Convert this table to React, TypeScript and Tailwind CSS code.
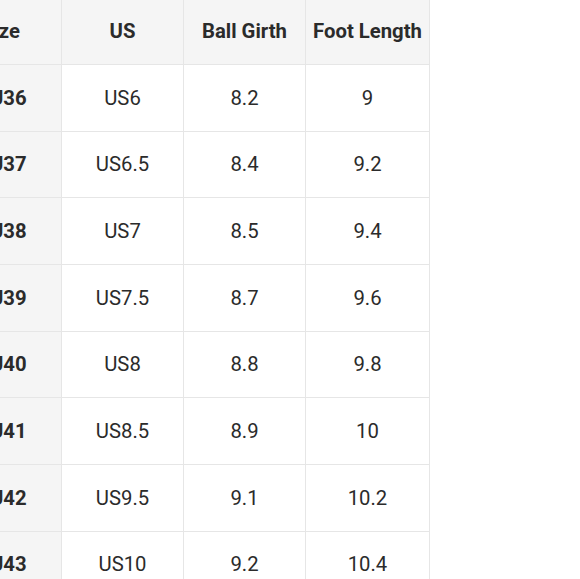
import React from "react";

const rows = [
  ["EU36", "US6", "8.2", "9"],
  ["EU37", "US6.5", "8.4", "9.2"],
  ["EU38", "US7", "8.5", "9.4"],
  ["EU39", "US7.5", "8.7", "9.6"],
  ["EU40", "US8", "8.8", "9.8"],
  ["EU41", "US8.5", "8.9", "10"],
  ["EU42", "US9.5", "9.1", "10.2"],
  ["EU43", "US10", "9.2", "10.4"],
];

const headers = ["Size", "US", "Ball Girth", "Foot Length"];

export default function App() {
  return (
    <div
      className="w-[580px] h-[579px] overflow-hidden bg-white text-[#2b2b2b]"
      style={{ fontFamily: "Roboto, 'Liberation Sans', sans-serif" }}
    >
      <div className="ml-[-60px] w-[490px] grid grid-cols-[122px_122px_122px_124px] text-[20.3px]">
        {headers.map((h) => (
          <div
            key={h}
            className="h-[65px] pb-[2px] flex items-center justify-center font-bold bg-[#f5f5f5] border-r border-b border-[#e6e6e6]"
          >
            {h}
          </div>
        ))}
        {rows.map((r, i) =>
          r.map((c, j) => (
            <div
              key={i + "-" + j}
              className={
                "h-[66.67px] flex items-center justify-center border-r border-b border-[#e6e6e6] " +
                (j === 0 ? "bg-[#f5f5f5] font-bold pl-[4px]" : "bg-white")
              }
            >
              {c}
            </div>
          ))
        )}
      </div>
    </div>
  );
}
